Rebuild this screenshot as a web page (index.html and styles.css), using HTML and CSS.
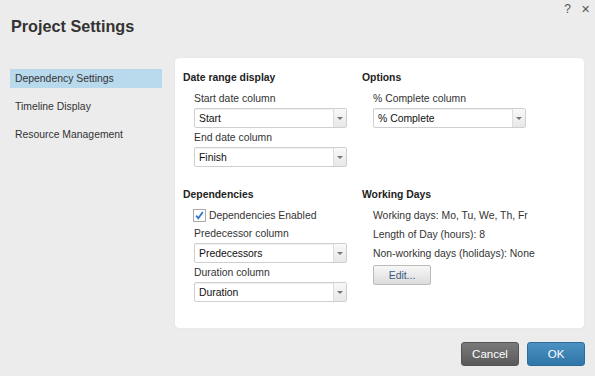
FILE: index.html
```html
<!DOCTYPE html>
<html lang="en">
<head>
    <meta charset="UTF-8">
    <title>Project Settings</title>
    <link rel="stylesheet" href="styles.css">
</head>
<body>
    <div class="dialog">
        <div class="header">
            <h1>Project Settings</h1>
            <div class="tools">
                <span class="tool">?</span>
                <span class="tool close">&#x2715;</span>
            </div>
        </div>

        <div class="main">
            <!-- Menu laterale -->
            <ul class="sidebar">
                <li class="selected">Dependency Settings</li>
                <li>Timeline Display</li>
                <li>Resource Management</li>
            </ul>

            <div class="panel">
                <div class="section">
                    <h2>Date range display</h2>
                    <div class="field">
                        <div class="label">Start date column</div>
                        <div class="select"><span>Start</span><i class="arrow"></i></div>
                        <div class="label">End date column</div>
                        <div class="select"><span>Finish</span><i class="arrow"></i></div>
                    </div>
                </div>
                <div class="section">
                    <h2>Options</h2>
                    <div class="field">
                        <div class="label">% Complete column</div>
                        <div class="select"><span>% Complete</span><i class="arrow"></i></div>
                    </div>
                </div>
                <div class="section">
                    <h2>Dependencies</h2>
                    <div class="field">
                        <div class="check">
                            <span class="box">
                                <svg width="11" height="11" viewBox="0 0 11 11"><path d="M2.2 5.6 L4.3 8.2 L8.8 2" fill="none" stroke="#2a78c6" stroke-width="1.8"/></svg>
                            </span>
                            Dependencies Enabled
                        </div>
                        <div class="label">Predecessor column</div>
                        <div class="select"><span>Predecessors</span><i class="arrow"></i></div>
                        <div class="label">Duration column</div>
                        <div class="select"><span>Duration</span><i class="arrow"></i></div>
                    </div>
                </div>
                <div class="section">
                    <h2>Working Days</h2>
                    <div class="field">
                        <div class="line">Working days: Mo, Tu, We, Th, Fr</div>
                        <div class="line">Length of Day (hours): 8</div>
                        <div class="line">Non-working days (holidays): None</div>
                        <button class="edit">Edit...</button>
                    </div>
                </div>
            </div>
        </div>

        <div class="footer">
            <button class="btn cancel">Cancel</button>
            <button class="btn ok">OK</button>
        </div>
    </div>
</body>
</html>
```

FILE: styles.css
```css
body {
    margin: 0;
    background: #ececec;
    font-family: 'Liberation Sans', Arial, sans-serif;
    font-size: 10.4px;
    color: #333;
}

.dialog {
    width: 595px;
    height: 376px;
    display: flex;
    flex-direction: column;
}

.header {
    display: flex;
    justify-content: space-between;
    height: 58px;
}

h1 {
    margin: 16px 0 0 11px;
    font-size: 16.2px;
    line-height: 20px;
    color: #333;
}

.tools {
    display: flex;
    gap: 10px;
    padding: 1px 5px 0 0;
}

.tool {
    font-size: 12px;
    color: #555;
    line-height: 16px;
}

.close {
    font-size: 11px;
}

.main {
    display: flex;
    height: 270px;
}

.sidebar {
    list-style: none;
    margin: 11px 0 0 10px;
    padding: 0;
    width: 152px;
}

.sidebar li {
    height: 19px;
    line-height: 19px;
    padding-left: 5px;
    margin-bottom: 9px;
    color: #333;
}

.sidebar li.selected {
    background: #b9d9ed;
}

.panel {
    margin-left: 13px;
    width: 409px;
    background: #fff;
    border-radius: 4px;
    box-shadow: 0 0 1px rgba(0, 0, 0, 0.15);
    padding: 11px 0 0 8px;
    box-sizing: border-box;
    display: grid;
    grid-template-columns: 179px 1fr;
    grid-template-rows: 117px 1fr;
}

h2 {
    margin: 0 0 2px;
    font-size: 10.4px;
    line-height: 18px;
    color: #222;
}

.field {
    padding-left: 11px;
}

.label {
    line-height: 19px;
}

.select {
    width: 153px;
    height: 20px;
    box-sizing: border-box;
    border: 1px solid #cfcfcf;
    border-radius: 2px;
    box-shadow: inset 0 1px 1px rgba(0, 0, 0, 0.06);
    display: flex;
    align-items: center;
    justify-content: space-between;
    color: #111;
}

.select span {
    padding-left: 4px;
}

.arrow {
    width: 12px;
    height: 18px;
    border-left: 1px solid #ddd;
    background: linear-gradient(#f8f8f8, #e8e8e8);
    position: relative;
}

.arrow::after {
    content: "";
    position: absolute;
    left: 3px;
    top: 8px;
    border-left: 3px solid transparent;
    border-right: 3px solid transparent;
    border-top: 3px solid #777;
}

.check {
    height: 18px;
    display: flex;
    align-items: center;
    gap: 3px;
    margin-left: -1px;
}

.box {
    width: 11px;
    height: 11px;
    border: 1px solid #aaa;
    display: flex;
}

.line {
    line-height: 19px;
    height: 19px;
}

.edit {
    margin-top: 2px;
    width: 58px;
    height: 20px;
    border: 1px solid #bbb;
    border-radius: 2px;
    background: linear-gradient(#f7f7f7, #dcdcdc);
    font-family: 'Liberation Sans', Arial, sans-serif;
    font-size: 10.4px;
    color: #3a5a7c;
    padding: 0;
}

.footer {
    display: flex;
    justify-content: flex-end;
    gap: 8px;
    padding: 14px 10px 0 0;
}

.btn {
    width: 58px;
    height: 24px;
    border-radius: 3px;
    font-family: 'Liberation Sans', Arial, sans-serif;
    font-size: 11.5px;
    color: #fff;
    padding: 0;
}

.cancel {
    background: linear-gradient(#7a7a7a, #5a5a5a);
    border: 1px solid #555;
}

.ok {
    background: linear-gradient(#4b91c2, #2f77a8);
    border: 1px solid #2d6d99;
}
```
